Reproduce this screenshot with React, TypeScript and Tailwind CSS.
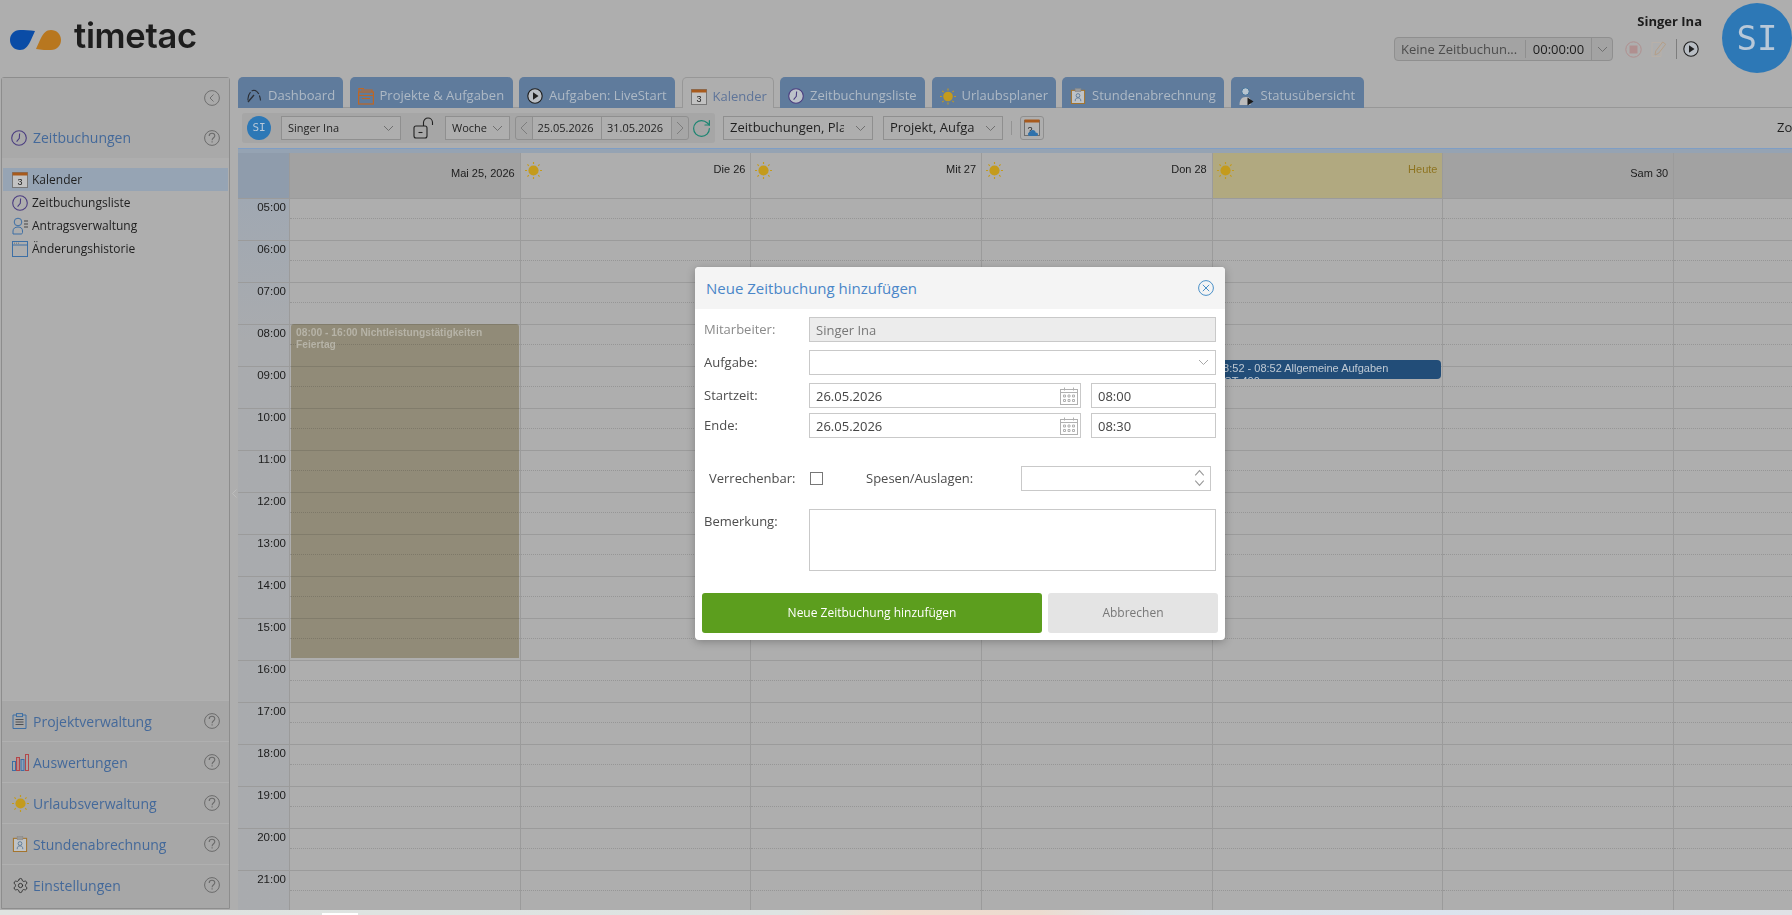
import type { ReactNode } from 'react'
import { RotateCw, Settings } from 'lucide-react'

// icons
function Chevron({ className = 'text-[#6f6f6f]' }: { className?: string }) {
  return (
    <svg width="11" height="7" viewBox="0 0 11 7" className={className} fill="none" stroke="currentColor">
      <path d="M1 1l4.500 4.500L10 1" />
    </svg>
  )
}

function Clock({ size = 16, fill = 'none' }: { size?: number; fill?: string }) {
  return (
    <svg width={size} height={size} viewBox="0 0 16 16" fill={fill} stroke="#4b3d80" strokeWidth="1.100">
      <circle cx="8" cy="8" r="7.300" />
      <path d="M8.600 3.500L8.300 8.400 5.600 11.600" fill="none" />
    </svg>
  )
}

function Help() {
  return (
    <svg width="16" height="16" viewBox="0 0 16 16" fill="none" stroke="#6b6b6b" strokeWidth="1">
      <circle cx="8" cy="8" r="7.400" />
      <path d="M5.200 5.900c0-1.700 1.200-2.700 2.800-2.700s2.800 1 2.800 2.500c0 2-2.700 2.100-2.700 4.600" strokeWidth="1.100" />
      <path d="M8.100 11.200v1.400" strokeWidth="1.100" />
    </svg>
  )
}

function Sun({ size = 17 }: { size?: number }) {
  return (
    <svg width={size} height={size} viewBox="0 0 16 16" stroke="#c49b1d" fill="#c49b1d" strokeWidth="1.100">
      <circle cx="8" cy="8" r="4.800" stroke="none" />
      <path d="M8 0v1.900M8 14.100V16M0 8h1.900M14.100 8H16M2.300 2.300l1.300 1.300M12.400 12.400l1.300 1.300M2.300 13.700l1.300-1.300M12.400 3.600l1.300-1.300" />
    </svg>
  )
}

function CalendarThree({ size = 16 }: { size?: number }) {
  return (
    <svg width={size} height={size} viewBox="0 0 16 16">
      <rect x="0.500" y="0.500" width="15" height="15" fill="#c2c2c2" stroke="#777" />
      <rect x="0.500" y="0.500" width="15" height="3" fill="#a85a1c" />
      <text x="8" y="13" textAnchor="middle" fontSize="9" fontFamily="Liberation Sans" fill="#222">3</text>
    </svg>
  )
}

function Gauge() {
  return (
    <svg width="16" height="16" viewBox="0 0 16 16" fill="none" stroke="#2b2f36" strokeWidth="1.100">
      <path d="M2 12.500C1.500 7 4.500 2.500 8 2.200c3.500.3 6 4.500 6.500 10.300" strokeDasharray="9 1.500" />
      <path d="M2 14l6-7" strokeWidth="1.300" />
    </svg>
  )
}

function Folder() {
  return (
    <svg width="16" height="18" viewBox="0 0 16 18" fill="none" stroke="#bd6726" strokeWidth="1.200">
      <path d="M1 5V1.500h5M3 3h11v2" />
      <rect x="0.600" y="5" width="14.800" height="12" />
      <path d="M0.600 8.500h14.800M4 11.500h8" />
    </svg>
  )
}

function PlayCircle({ size = 16 }: { size?: number }) {
  return (
    <svg width={size} height={size} viewBox="0 0 16 16" stroke="#1f1f1f" strokeWidth="1.100" fill="none">
      <circle cx="8" cy="8" r="7.200" fill="#b9bec4" />
      <path d="M6 4.300l5.500 3.700L6 11.700z" fill="#1f1f1f" stroke="none" />
    </svg>
  )
}

function Clipboard({ size = 16 }: { size?: number }) {
  return (
    <svg width={size} height={size} viewBox="0 0 16 17" fill="none">
      <rect x="1" y="2.500" width="14" height="14" fill="#bfc3c6" stroke="#a4742c" strokeWidth="1.100" />
      <rect x="5" y="0.700" width="6" height="3.300" fill="#9a9a9a" stroke="#8a8a8a" strokeWidth="0.600" />
      <circle cx="8" cy="8" r="2" stroke="#5d7b99" />
      <path d="M5 14c0-2.500 1-3.500 3-3.500s3 1 3 3.500" stroke="#5d7b99" />
    </svg>
  )
}

function StatusPerson() {
  return (
    <svg width="15" height="19" viewBox="0 0 15 19">
      <circle cx="6.500" cy="4.500" r="3.700" fill="#b7c4cf" stroke="#3c6f99" strokeWidth="0.900" />
      <path d="M0.500 18c0-5 2-8 6-8s5 1.500 5 3v5z" fill="#bcbcbc" />
      <path d="M8.500 10.500l6 4-6 4z" fill="#1b1b1b" />
    </svg>
  )
}

function LockOpen() {
  return (
    <svg width="21" height="22" viewBox="0 0 21 22" fill="none" stroke="#222" strokeWidth="1.100">
      <rect x="1" y="9" width="13" height="12" rx="2" />
      <path d="M5.500 15.500h4" />
      <path d="M10.500 9V5.500C10.500 3 12.500 1 15 1s4.500 2 4.500 4.500V8" />
    </svg>
  )
}

function CalendarCloud() {
  return (
    <svg width="16" height="18" viewBox="0 0 16 18">
      <rect x="0.500" y="1.500" width="15" height="15" fill="#b4b4b4" stroke="#6f6f6f" />
      <rect x="0.500" y="0.500" width="15" height="3" fill="#a85a1c" />
      <text x="6" y="14" textAnchor="middle" fontSize="9" fontFamily="Liberation Sans" fill="#222">?</text>
      <path d="M6 17c-1.500 0-2-1-2-2 0-1 .8-1.800 1.800-1.800C6.300 11.800 7.500 11 8.800 11c1.600 0 2.700 1.200 2.800 2.500 1.300 0 2.400.8 2.400 1.800 0 1-.7 1.700-2 1.700z" fill="#2f72ac" />
    </svg>
  )
}

function RequestIcon() {
  return (
    <svg width="16" height="18" viewBox="0 0 16 18" fill="none" stroke="#3d6fa5" strokeWidth="1">
      <circle cx="6" cy="5" r="3.800" />
      <path d="M1 17v-3c0-2.500 2-4 5-4s4.500 1.500 4.500 4v1.500c0 1-.7 1.500-1.500 1.500z" />
      <path d="M12 4h4M12 7h4M12 10h4" stroke="#444" />
    </svg>
  )
}

function WindowIcon() {
  return (
    <svg width="16" height="16" viewBox="0 0 16 16" fill="none" stroke="#3d6fa5" strokeWidth="1">
      <rect x="0.500" y="0.500" width="15" height="15" />
      <path d="M0.500 4h15" />
      <path d="M2 2.200h1M4 2.200h1M6 2.200h1" stroke="#777" />
    </svg>
  )
}

function ProjectIcon() {
  return (
    <svg width="15" height="16" viewBox="0 0 15 16" fill="none" stroke="#3d6fa5" strokeWidth="1">
      <path d="M4.500 2H1v13.500h13V2h-3.500" />
      <rect x="4.500" y="0.600" width="6" height="3" />
      <path d="M3.500 6.500h8M3.500 9h8M3.500 11.500h8" stroke="#4a4f55" />
    </svg>
  )
}

function BarsIcon() {
  return (
    <svg width="17" height="17" viewBox="0 0 17 17" fill="none" strokeWidth="1">
      <rect x="0.500" y="7.500" width="3" height="9" stroke="#3d6fa5" />
      <rect x="4.500" y="3.500" width="3" height="13" stroke="#b3474a" fill="#b98b8b" />
      <rect x="9" y="5.500" width="3" height="11" stroke="#3d6fa5" fill="#8aa0b8" />
      <rect x="13.500" y="0.500" width="3" height="16" stroke="#b3474a" />
    </svg>
  )
}

function DatePick() {
  return (
    <svg width="18" height="18" viewBox="0 0 18 18" fill="none" stroke="#b0b0b0" strokeWidth="1">
      <rect x="0.500" y="2.500" width="17" height="15" />
      <path d="M0.500 5.500h17M4.500 0.500v3M13.500 0.500v3" />
      <path d="M3.500 8h2v2h-2zM8 8h2v2H8zM12.500 8h2v2h-2zM3.500 12.500h2v2h-2zM8 12.500h2v2H8zM12.500 12.500h2v2h-2z" />
    </svg>
  )
}

// data
interface Tab {
  label: string
  width: string
  icon: ReactNode
  active?: boolean
}

const TABS: Tab[] = [
  { label: 'Dashboard', width: 'w-[105px]', icon: <Gauge /> },
  { label: 'Projekte & Aufgaben', width: 'w-[163px]', icon: <Folder /> },
  { label: 'Aufgaben: LiveStart', width: 'w-[156px]', icon: <PlayCircle /> },
  { label: 'Kalender', width: 'w-[92px]', icon: <CalendarThree />, active: true },
  { label: 'Zeitbuchungsliste', width: 'w-[145px]', icon: <Clock fill="#bcc2c9" /> },
  { label: 'Urlaubsplaner', width: 'w-[124px]', icon: <Sun /> },
  { label: 'Stundenabrechnung', width: 'w-[162px]', icon: <Clipboard /> },
  { label: 'Statusübersicht', width: 'w-[133px]', icon: <StatusPerson /> },
]

const SIDE_LINKS = [
  { label: 'Kalender', icon: <CalendarThree />, active: true },
  { label: 'Zeitbuchungsliste', icon: <Clock /> },
  { label: 'Antragsverwaltung', icon: <RequestIcon /> },
  { label: 'Änderungshistorie', icon: <WindowIcon /> },
]

const SIDE_SECTIONS = [
  { label: 'Projektverwaltung', icon: <ProjectIcon /> },
  { label: 'Auswertungen', icon: <BarsIcon /> },
  { label: 'Urlaubsverwaltung', icon: <Sun /> },
  { label: 'Stundenabrechnung', icon: <Clipboard /> },
  { label: 'Einstellungen', icon: <Settings size={17} strokeWidth={1.25} className="text-[#2b2b2b]" /> },
]

const DAYS = [
  { label: 'Mai 25, 2026', kind: 'off' },
  { label: 'Die 26', kind: 'work' },
  { label: 'Mit 27', kind: 'work' },
  { label: 'Don 28', kind: 'work' },
  { label: 'Heute', kind: 'today' },
  { label: 'Sam 30', kind: 'off' },
  { label: '', kind: 'off' },
]

const HOURS = ['05', '06', '07', '08', '09', '10', '11', '12', '13', '14', '15', '16', '17', '18', '19', '20', '21']

const GRID = 'grid grid-cols-[51px_repeat(6,230.7px)_1fr]'

// header
function AppHeader() {
  return (
    <header className="flex h-[77px] items-start justify-between">
      <div className="flex items-center pl-[10px] pt-[18px]">
        <svg width="51" height="20" viewBox="0 0 51 20" className="mt-[7px]">
          <path d="M25 1C20 0 14 0 10 0 4 0 0 4.500 0 10 0 16 4.500 20 10 20 15 20 17.500 16.500 19.500 13 21.500 9.500 23.500 4 25 1z" fill="#0a4ca6" />
          <path d="M26 19C31 20 37 20 41 20 47 20 51 15.500 51 10 51 4 46.500 0 41 0 36 0 33.500 3.500 31.500 7 29.500 10.500 27.500 16 26 19z" fill="#b8771f" />
        </svg>
        <span className="ml-[13px] font-['Inter'] text-[34.500px] leading-[36px] font-semibold tracking-[-0.3px] text-[#1d1d1d]">timetac</span>
      </div>
      <div className="flex">
        <div className="flex flex-col items-end">
          <div className="mt-[12px] h-[18px] text-[13px] leading-[18px] font-bold text-[#1c1c1c]">Singer Ina</div>
          <div className="mt-[7px] flex h-[24px] items-center">
            <div className="flex h-[24px] w-[219px] items-center rounded-[4px] border border-[#8f8f8f] bg-[#a3a3a3] text-[13px] text-[#4c4c4c]">
              <span className="w-[131px] truncate border-r border-[#8f8f8f] pl-[6px] leading-[18px]">Keine Zeitbuchun...</span>
              <span className="w-[66px] border-r border-[#8f8f8f] text-center leading-[22px] text-[#1c1c1c]">00:00:00</span>
              <span className="flex flex-1 justify-center"><Chevron /></span>
            </div>
            <svg width="17" height="17" viewBox="0 0 17 17" className="ml-[12px]" fill="none">
              <circle cx="8.500" cy="8.500" r="7.700" stroke="#b08f8f" />
              <rect x="4.500" y="4.500" width="8" height="8" fill="#b08f8f" />
            </svg>
            <svg width="16" height="18" viewBox="0 0 16 18" className="ml-[9px]" fill="none" stroke="#b59f88" strokeWidth="1">
              <path d="M1 2.500h9v14H1z" stroke="#b8b0a8" />
              <path d="M4 15l.7-4 7-9 3 2.200-7 9z" />
            </svg>
            <span className="ml-[9px] h-[20px] w-px bg-[#7d7d7d]" />
            <span className="ml-[6px] mr-[3px]"><PlayCircle size={16} /></span>
          </div>
        </div>
        <div className="mt-[3px] ml-[20px] flex size-[70px] items-center justify-center rounded-full bg-[#2d78b6] font-['DejaVu_Sans_Mono'] text-[34px] text-[#b8c8d8]">SI</div>
      </div>
    </header>
  )
}

// left column
function Sidebar() {
  return (
    <aside className="ml-px flex h-[832px] w-[229px] flex-col rounded-t-[3px] border border-[#8d8d8d] bg-[#aeaeae]">
      <div className="h-[80px] shrink-0 bg-[#a9a9a9]">
        <div className="flex h-[40px] items-start justify-end pr-[9px] pt-[12px]">
          <svg width="16" height="16" viewBox="0 0 16 16" fill="none" stroke="#6f6f6f">
            <circle cx="8" cy="8" r="7.400" />
            <path d="M9.500 4.500L6 8l3.500 3.500" />
          </svg>
        </div>
        <div className="mt-[6px] flex items-center px-[9px]">
          <Clock />
          <span className="ml-[6px] flex-1 text-[14px] leading-[28px] text-[#44699a]">Zeitbuchungen</span>
          <Help />
        </div>
      </div>
      <nav className="mt-[10px] px-px text-[12px] text-[#1f1f1f]">
        {SIDE_LINKS.map(link => (
          <div key={link.label} className={`flex h-[23px] items-center pl-[9px] ${link.active ? 'bg-[#96a4b4]' : ''}`}>
            <span className="flex w-[20px] justify-start">{link.icon}</span>
            <span>{link.label}</span>
          </div>
        ))}
      </nav>
      <div className="mt-auto bg-[#a7a7a7] pb-[3px]">
        {SIDE_SECTIONS.map(section => (
          <div key={section.label} className="flex h-[41px] items-center border-t border-[#b0b0b0] pl-[10px] pr-[9px]">
            <span className="flex w-[21px]">{section.icon}</span>
            <span className="flex-1 text-[14px] text-[#44699a]">{section.label}</span>
            <Help />
          </div>
        ))}
      </div>
    </aside>
  )
}

// tabs + toolbar
function TabBar() {
  return (
    <div className="flex h-[31px] gap-[6.500px] border-b border-[#979797]">
      {TABS.map(tab => (
        <div
          key={tab.label}
          className={`flex h-[31px] items-center rounded-t-[5px] pl-[8px] pt-[7px] text-[13px] ${tab.width} ${
            tab.active ? 'border border-b-0 border-[#979797] bg-[#aeaeae] text-[#5e7499]' : 'h-[30px] bg-[#5f7b9c] text-[#aeb9c5]'
          }`}
        >
          <span className="mr-[6px] flex w-[16px] justify-center">{tab.icon}</span>
          <span className="whitespace-nowrap">{tab.label}</span>
        </div>
      ))}
    </div>
  )
}

function ToolSelect({ label, width, clip }: { label: string; width: string; clip?: string }) {
  return (
    <div className={`flex h-[24px] items-center justify-between border border-[#8f8f8f] bg-[#aeaeae] px-[6px] text-[#1f1f1f] ${width}`}>
      <span className={`overflow-hidden whitespace-nowrap ${clip ?? ''}`}>{label}</span>
      <Chevron />
    </div>
  )
}

function Toolbar() {
  return (
    <div className="flex h-[40px] items-center pl-[4px] text-[11px]">
      <div className="flex h-[30px] w-[473px] items-center rounded-[3px] bg-[#a6a6a6] pl-[5px]">
        <div className="flex size-[24px] items-center justify-center rounded-full bg-[#2d78b6] font-['DejaVu_Sans_Mono'] text-[11px] text-[#b8c8d8]">SI</div>
        <div className="ml-[10px]"><ToolSelect label="Singer Ina" width="w-[120px]" /></div>
        <div className="ml-[12px]"><LockOpen /></div>
        <div className="ml-[11px]"><ToolSelect label="Woche" width="w-[65px]" /></div>
        <div className="ml-[5px] flex h-[24px] items-center rounded-[3px] border border-[#8f8f8f] text-[#1f1f1f]">
          <span className="flex w-[16px] justify-center">
            <svg width="8" height="14" viewBox="0 0 8 14" fill="none" stroke="#7d7d7d"><path d="M7 1L1 7l6 6" /></svg>
          </span>
          <span className="w-[70px] border-x border-[#8f8f8f] bg-[#aeaeae] pr-[3px] text-center leading-[22px]">25.05.2026</span>
          <span className="w-[70px] border-r border-[#8f8f8f] bg-[#aeaeae] pr-[3px] text-center leading-[22px]">31.05.2026</span>
          <span className="flex w-[16px] justify-center">
            <svg width="8" height="14" viewBox="0 0 8 14" fill="none" stroke="#7d7d7d"><path d="M1 1l6 6-6 6" /></svg>
          </span>
        </div>
        <RotateCw size={21} strokeWidth={1.4} className="ml-[2px] text-[#1d8572]" />
      </div>
      <div className="ml-[8px] text-[13px]"><ToolSelect label="Zeitbuchungen, Plan" width="w-[150px]" clip="w-[114px]" /></div>
      <div className="ml-[10px] text-[13px]"><ToolSelect label="Projekt, Aufgabe" width="w-[120px]" clip="w-[84px]" /></div>
      <span className="ml-[8px] h-[14px] w-px bg-[#939393]" />
      <div className="ml-[8px] flex h-[24px] w-[24px] items-center justify-center rounded-[3px] border border-[#8f8f8f]"><CalendarCloud /></div>
      <span className="ml-auto w-[15px] overflow-hidden whitespace-nowrap text-[13px] text-[#1f1f1f]">Zoom</span>
    </div>
  )
}

// calendar
function CalendarGrid() {
  return (
    <div className="relative flex-1 overflow-hidden border-t border-[#7f9ec5] font-['Liberation_Sans'] text-[11px] text-[#1c1c1c]">
      <div className="h-[4px] bg-[#95a3b3]" />
      <div className={GRID}>
        <div className="h-[45px] bg-[#8f9cac]" />
        {DAYS.map(day => (
          <div
            key={day.label || 'son'}
            className={`flex h-[45px] justify-between border-l border-[#9b9b9b] pl-[4px] pr-[5px] ${
              day.kind === 'off' ? 'justify-end bg-[#a2a2a2] pt-[13px]' : day.kind === 'today' ? 'bg-[#b1a980] pt-[9px] text-[#8e7420]' : 'bg-[#aeaeae] pt-[9px]'
            }`}
          >
            {day.kind !== 'off' && <Sun />}
            <span className="leading-[14px]">{day.label}</span>
          </div>
        ))}
      </div>
      <div className="relative bg-linear-to-b from-[#a0a8b2] from-0% via-[#a9abae] via-20% to-[#a9abae] bg-[length:51px_100%] bg-no-repeat">
        {HOURS.map(hour => (
          <div key={hour} className={`${GRID} h-[42px] border-t border-[#9b9b9b]`}>
            <div className="pr-[3px] pt-[1px] text-right text-[11.500px] leading-[14px]">{hour}:00</div>
            {DAYS.map(day => (
              <div key={day.label || 'son'} className="border-l border-[#9b9b9b]">
                <div className="h-[20px] border-b border-dotted border-[#969696]" />
              </div>
            ))}
          </div>
        ))}
        <div className="absolute left-[53px] top-[126px] h-[334px] w-[228px] overflow-hidden rounded-t-[3px] text-[10.250px] font-bold leading-[12px] text-[#b6b3a7]">
          <div className="absolute inset-0 bg-[#d4ccb0] mix-blend-multiply" />
          <div className="relative px-[5px] py-[3px]">08:00 - 16:00 Nichtleistungstätigkeiten<br />Feiertag</div>
        </div>
        <div className="absolute left-[975px] top-[162px] h-[19px] w-[228px] overflow-hidden rounded-r-[4px] bg-[#224d78] pl-[4px] pt-[2px] text-[11px] leading-[13px] text-[#c0cad4]">
          08:52 - 08:52 Allgemeine Aufgaben<br />PST-400
        </div>
      </div>
    </div>
  )
}

// dialog
function Field({ value, className = '', muted }: { value?: string; className?: string; muted?: boolean }) {
  return (
    <input
      readOnly
      value={value ?? ''}
      className={`block h-[25px] border border-[#c9c9c9] px-[6px] text-[13px] outline-none ${muted ? 'bg-[#ececec] text-[#777]' : 'bg-white text-[#444]'} ${className}`}
    />
  )
}

function DateField({ value }: { value: string }) {
  return (
    <div className="relative w-[272px]">
      <Field value={value} className="w-full" />
      <span className="absolute right-[3px] top-[4px]"><DatePick /></span>
    </div>
  )
}

function Row({ label, children, muted }: { label: string; children: ReactNode; muted?: boolean }) {
  return (
    <div className="flex">
      <label className={`w-[105px] text-[13px] leading-[24px] ${muted ? 'text-[#8a8a8a]' : 'text-[#4d4d4d]'}`}>{label}</label>
      {children}
    </div>
  )
}

function BookingDialog() {
  return (
    <div className="absolute left-[695px] top-[267px] h-[373px] w-[530px] overflow-hidden rounded-[4px] bg-white font-['Open_Sans'] shadow-[0_2px_8px_rgba(0,0,0,0.25)]">
      <div className="flex h-[42px] items-center justify-between bg-[#f4f4f4] pl-[11px] pr-[3px]">
        <span className="text-[15px] text-[#4a86c8]">Neue Zeitbuchung hinzufügen</span>
        <svg width="16" height="16" viewBox="0 0 16 16" fill="none" stroke="#4a90c8" strokeWidth="1" className="mr-[8px]">
          <circle cx="8" cy="8" r="7.400" />
          <path d="M4.800 4.800l6.400 6.400M11.200 4.800l-6.400 6.400" />
        </svg>
      </div>
      <div className="px-[9px] pt-[8px]">
        <Row label="Mitarbeiter:" muted><Field value="Singer Ina" muted className="w-[407px]" /></Row>
        <div className="mt-[8px]">
          <Row label="Aufgabe:">
            <div className="relative w-[407px]">
              <Field className="w-full" />
              <span className="absolute right-[7px] top-[9px]"><Chevron className="text-[#a8a8a8]" /></span>
            </div>
          </Row>
        </div>
        <div className="mt-[8px]">
          <Row label="Startzeit:">
            <DateField value="26.05.2026" />
            <Field value="08:00" className="ml-[10px] w-[125px]" />
          </Row>
        </div>
        <div className="mt-[5px]">
          <Row label="Ende:">
            <DateField value="26.05.2026" />
            <Field value="08:30" className="ml-[10px] w-[125px]" />
          </Row>
        </div>
        <div className="mt-[28px] flex items-center pl-[5px] text-[13px] text-[#4d4d4d]">
          <span className="w-[101px]">Verrechenbar:</span>
          <span className="size-[13px] border border-[#777]" />
          <span className="ml-[43px] w-[154.500px]">Spesen/Auslagen:</span>
          <div className="relative w-[190px]">
            <Field className="w-full" />
            <svg width="11" height="18" viewBox="0 0 10 17" fill="none" stroke="#999" className="absolute right-[6px] top-[3px]">
              <path d="M1 6l4-4.500L9 6M1 11l4 4.500L9 11" />
            </svg>
          </div>
        </div>
        <div className="mt-[18px] flex">
          <label className="w-[105px] pt-[3px] text-[13px] leading-[18px] text-[#4d4d4d]">Bemerkung:</label>
          <textarea readOnly className="h-[62px] w-[407px] resize-none border border-[#c9c9c9] bg-white outline-none" />
        </div>
      </div>
      <div className="mt-[22px] flex gap-[6px] pl-[7px]">
        <button className="h-[40px] w-[340px] rounded-[3px] bg-[#5c9e1e] text-[12px] font-medium text-white">Neue Zeitbuchung hinzufügen</button>
        <button className="h-[40px] w-[170px] rounded-[3px] bg-[#e4e4e4] text-[12px] text-[#777]">Abbrechen</button>
      </div>
    </div>
  )
}

export default function App() {
  return (
    <div className="relative flex h-[915px] w-[1792px] flex-col overflow-hidden bg-[#aeaeae] font-['Open_Sans',sans-serif]">
      <div className="h-[910px] shrink-0">
        <AppHeader />
        <div className="flex">
          <Sidebar />
          <div className="flex w-[8px] items-center justify-center">
            <svg width="5" height="9" viewBox="0 0 5 9" fill="none" stroke="#bcbcbc"><path d="M4.500 0.500L0.500 4.500l4 4" /></svg>
          </div>
          <main className="flex h-[833px] min-w-0 flex-1 flex-col">
            <TabBar />
            <Toolbar />
            <CalendarGrid />
          </main>
        </div>
      </div>
      <div className="h-[5px] shrink-0 bg-[linear-gradient(90deg,#dfe3e0_0%,#dde4e2_44%,#f0dccf_50%,#ecdcd0_58%,#dfe6ea_64%,#dbe4ee_80%,#e0e2e6_100%)]">
        <div className="ml-[322px] mt-[3px] h-[2px] w-[36px] bg-white" />
      </div>
      <BookingDialog />
    </div>
  )
}
